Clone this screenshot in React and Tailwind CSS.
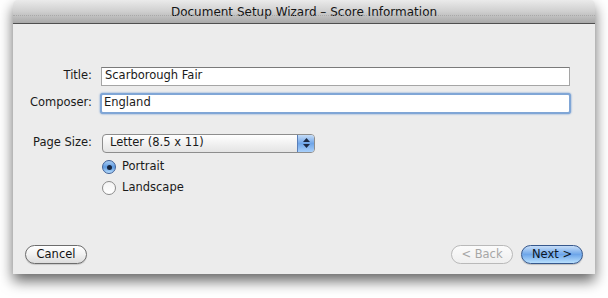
export default function App() {
  const font = { fontFamily: '"DejaVu Sans", "Liberation Sans", sans-serif' };
  return (
    <div className="w-[608px] h-[298px] bg-white overflow-hidden" style={font}>
      <div className="mx-[13px] h-[274px] flex flex-col rounded-t-[5px] bg-[#ececec] shadow-[0_7px_14px_rgba(0,0,0,0.6)]">
        {/* title bar */}
        <div className="h-[24px] shrink-0 rounded-t-[5px] bg-gradient-to-b from-[#ebebeb] via-[#cfcfcf] to-[#a9a9a9] border-b border-[#4f4f4f] flex items-center justify-center relative">
          <span className="text-[12px] text-[#141414]">Document Setup Wizard – Score Information</span>
          <div className="absolute left-0 right-0 top-[15px] border-t border-dotted border-[#9a9a9a] opacity-60"></div>
        </div>

        {/* body */}
        <div className="flex-1 flex flex-col px-[12px] pt-[42px] pb-[10px] text-[11.5px] text-[#1a1a1a]">
          <div className="flex items-center h-[20px]">
            <div className="w-[67px] text-right">Title:</div>
            <div className="ml-[9px] w-[469px] h-[19px] bg-white border border-[#a5a5a5] border-t-[#7a7a7a] flex items-center pl-[3px]">
              Scarborough Fair
            </div>
          </div>
          <div className="flex items-center h-[20px] mt-[7px]">
            <div className="w-[67px] text-right">Composer:</div>
            <div className="ml-[8px] w-[471px] h-[21px] rounded-[3px] bg-white border-[2px] border-[#80a6d6] shadow-[0_0_2px_#5b8ccc] flex items-center pl-[2px]">
              England
            </div>
          </div>

          <div className="flex items-center h-[20px] mt-[20px]">
            <div className="w-[67px] text-right">Page Size:</div>
            <div className="ml-[10px] w-[213px] h-[19px] rounded-[4px] border border-[#8d8d8d] bg-gradient-to-b from-white to-[#e4e4e4] flex items-center overflow-hidden">
              <span className="pl-[7px] flex-1">Letter (8.5 x 11)</span>
              <div className="w-[17px] h-full bg-gradient-to-b from-[#c5dcf7] via-[#6fa5e8] to-[#a9d0fb] border-l border-[#5a7fb8] flex flex-col items-center justify-center gap-[2px]">
                <svg width="7" height="4" viewBox="0 0 7 4"><path d="M3.5 0 L7 4 L0 4 Z" fill="#1d2a44" /></svg>
                <svg width="7" height="4" viewBox="0 0 7 4"><path d="M0 0 L7 0 L3.5 4 Z" fill="#1d2a44" /></svg>
              </div>
            </div>
          </div>

          <div className="flex flex-col ml-[77px] mt-[7px] gap-[7px]">
            <div className="flex items-center h-[14px]">
              <div className="w-[14px] h-[14px] rounded-full border border-[#3e5f97] bg-gradient-to-b from-[#a9cdf3] via-[#5d99e0] to-[#b6dcfb] flex items-center justify-center">
                <div className="w-[5px] h-[5px] rounded-full bg-[#17253f]"></div>
              </div>
              <span className="ml-[6px]">Portrait</span>
            </div>
            <div className="flex items-center h-[14px]">
              <div className="w-[14px] h-[14px] rounded-full border border-[#8a8a8a] bg-gradient-to-b from-[#f4f4f4] to-white"></div>
              <span className="ml-[6px]">Landscape</span>
            </div>
          </div>

          <div className="flex-1"></div>

          <div className="flex items-center">
            <button className="w-[62px] h-[19px] rounded-full border border-[#6c6c6c] bg-gradient-to-b from-white via-[#f1f1f1] to-[#dcdcdc] text-[11.5px] text-[#111] shadow-[0_1px_1px_rgba(0,0,0,0.15)]">
              Cancel
            </button>
            <div className="flex-1"></div>
            <button className="w-[62px] h-[19px] rounded-full border border-[#b9b9b9] bg-gradient-to-b from-[#fbfbfb] to-[#efefef] text-[11.5px] text-[#a6a6a6]">
              &lt; Back
            </button>
            <button className="ml-[8px] w-[62px] h-[19px] rounded-full border border-[#37588c] bg-gradient-to-b from-[#c6ddf7] via-[#6ea6e9] to-[#b9e0fd] text-[11.5px] text-[#0e1726] shadow-[0_1px_1px_rgba(0,0,0,0.2)]">
              Next &gt;
            </button>
          </div>
        </div>
      </div>
    </div>
  );
}
